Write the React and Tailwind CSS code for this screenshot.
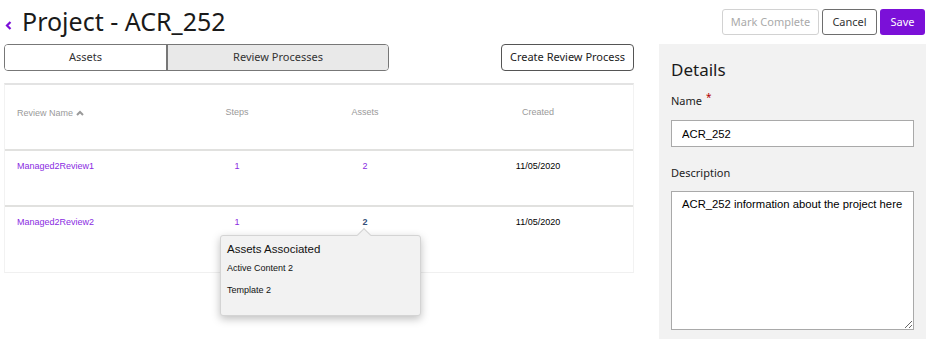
import React from "react";

const rows = [
  { name: "Managed2Review1", steps: 1, assets: 2, created: "11/05/2020" },
  { name: "Managed2Review2", steps: 1, assets: 2, created: "11/05/2020", hover: true },
];

const AssetsPopover = () => (
  <div className="absolute left-[220px] top-[235px] w-[201px] h-[81px] bg-[#f2f2f2] border border-[#d4d4d4] rounded-[3px] shadow-[0_3px_8px_rgba(0,0,0,0.25)] px-[6px] pt-[6px] font-['Liberation_Sans',sans-serif]">
    <div className="absolute -top-[6px] left-[138px] w-[10px] h-[10px] bg-[#f2f2f2] border-l border-t border-[#d4d4d4] rotate-45" />
    <div className="text-[11.5px] leading-[15px] text-[#111]">Assets Associated</div>
    <div className="mt-[6px] text-[9px] leading-[11px] text-[#111]">Active Content 2</div>
    <div className="mt-[11px] text-[9px] leading-[11px] text-[#111]">Template 2</div>
  </div>
);

export default function App() {
  return (
    <div className="relative w-[934px] h-[355px] bg-white overflow-hidden font-['Noto_Sans',sans-serif]">
      <div className="flex items-start justify-between h-[44px]">
        <div className="flex items-center pl-[5px] pt-[4px]">
          <svg width="7" height="9" viewBox="0 0 7 9" className="mt-[8px]">
            <path d="M5.5 1 L2 4.5 L5.5 8" stroke="#7b10d8" strokeWidth="2.2" fill="none" />
          </svg>
          <h1 className="ml-[10px] text-[25px] leading-[34px] text-[#1a1a1a]">Project - ACR_252</h1>
        </div>
        <div className="flex items-center gap-[3px] pt-[9px] pr-[9px]">
          <button className="h-[26px] w-[97px] rounded-[3px] border border-[#d2d2d2] text-[11px] text-[#aaa] bg-white">Mark Complete</button>
          <button className="h-[26px] w-[55px] rounded-[3px] border border-[#6e6e6e] text-[11px] text-[#333] bg-white">Cancel</button>
          <button className="h-[26px] w-[45px] rounded-[3px] bg-[#7b10d8] text-[11px] text-white">Save</button>
        </div>
      </div>

      <div className="flex">
        <div className="ml-[4px] w-[630px]">
          <div className="flex items-center justify-between h-[27px]">
            <div className="flex h-[27px] w-[385px] border border-[#777] rounded-[4px] overflow-hidden text-[11px] text-[#333]">
              <div className="w-[163px] flex items-center justify-center bg-white border-r-2 border-[#777]">Assets</div>
              <div className="flex-1 flex items-center justify-center bg-[#e9e9e9]">Review Processes</div>
            </div>
            <button className="h-[27px] w-[133px] rounded-[4px] border border-[#555] text-[11px] text-[#222] bg-white">Create Review Process</button>
          </div>

          <div className="mt-[12px] w-[630px] h-[190px] border-t-2 border-[#e3e3e3] border-x border-b border-x-[#f2f2f2] border-b-[#f0f0f0] font-['Liberation_Sans',sans-serif] text-[9px] leading-[11px]">
            <div className="grid grid-cols-[172px_120px_136px_1fr] h-[66px] border-b-2 border-[#e1e1df] text-[#9a9a9a]">
              <div className="pl-[12px] pt-[23px] flex items-start gap-[3px]">
                <span>Review Name</span>
                <svg width="8" height="6" viewBox="0 0 8 6" className="mt-[2px]">
                  <path d="M1 5 L4 2 L7 5" stroke="#9a9a9a" strokeWidth="2" fill="none" />
                </svg>
              </div>
              <div className="text-center pt-[22px]">Steps</div>
              <div className="text-center pt-[22px]">Assets</div>
              <div className="text-center pt-[22px] pl-[10px]">Created</div>
            </div>
            {rows.map((r, i) => (
              <div
                key={r.name}
                className={
                  "grid grid-cols-[172px_120px_136px_1fr] h-[56px] " +
                  (i === 0 ? "border-b-2 border-[#e1e1df]" : "")
                }
              >
                <div className="pl-[12px] pt-[10px] text-[#8a2be2]">{r.name}</div>
                <div className="text-center pt-[10px] text-[#8a2be2]">{r.steps}</div>
                <div className={"text-center pt-[10px] " + (r.hover ? "text-[#34507a] font-bold" : "text-[#8a2be2]")}>{r.assets}</div>
                <div className="text-center pt-[10px] pl-[10px] text-black">{r.created}</div>
              </div>
            ))}
          </div>
        </div>

        <div className="ml-[25px] w-[267px] h-[295px] bg-[#f2f2f2] px-[12px] pt-[14px]">
          <h2 className="text-[17px] leading-[24px] text-[#1a1a1a]">Details</h2>
          <div className="mt-[11px] text-[11px] leading-[16px] text-[#222] flex items-start">
            Name<span className="ml-[4px] -mt-[4px] text-[10px] text-[#b30000]">*</span>
          </div>
          <input
            readOnly
            value="ACR_252"
            className="mt-[11px] block w-[243px] h-[27px] border border-[#a9a9a9] bg-white pl-[10px] text-[11.25px] text-black font-['Liberation_Sans',sans-serif] outline-none"
          />
          <div className="mt-[18px] text-[11px] leading-[16px] text-[#222]">Description</div>
          <textarea
            readOnly
            wrap="off"
            value="ACR_252 information about the project here"
            className="mt-[10px] block w-[243px] h-[139px] border border-[#a9a9a9] bg-white pl-[10px] pr-[2px] pt-[5px] text-[11.25px] leading-[15px] text-black font-['Liberation_Sans',sans-serif] outline-none resize overflow-hidden"
          />
        </div>
      </div>

      <AssetsPopover />
    </div>
  );
}
